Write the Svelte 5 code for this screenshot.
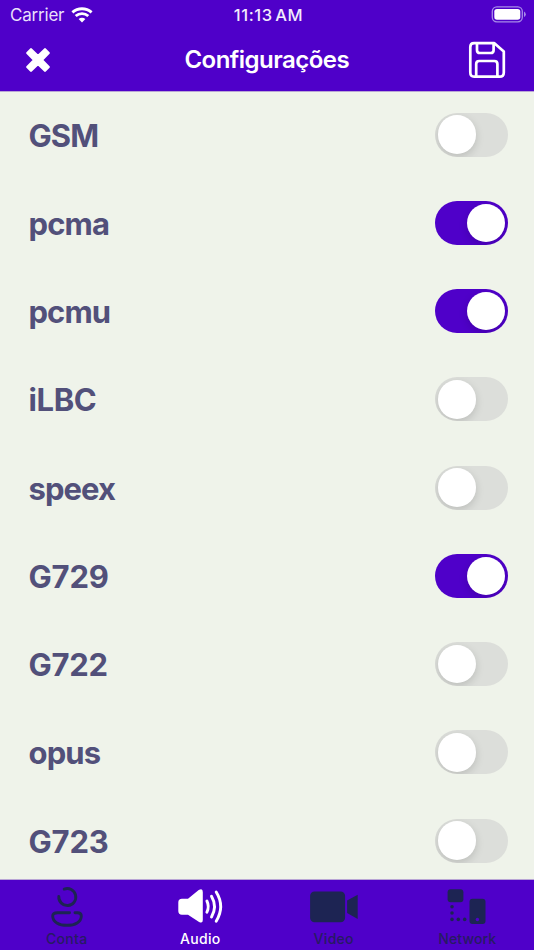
<script>
  const codecs = [
    { name: 'GSM', on: false, spacing: -0.95 },
    { name: 'pcma', on: true, spacing: -0.85 },
    { name: 'pcmu', on: true, spacing: -0.95 },
    { name: 'iLBC', on: false, spacing: -0.4 },
    { name: 'speex', on: false, spacing: -0.95 },
    { name: 'G729', on: true, spacing: -0.15 },
    { name: 'G722', on: false, spacing: -0.3 },
    { name: 'opus', on: false, spacing: -0.85 },
    { name: 'G723', on: false, spacing: -0.2 }
  ];
  let states = $state(codecs.map((c) => c.on));
</script>

<div class="screen">
  <header>
    <div class="status">
      <div class="carrier">
        <span>Carrier</span>
        <svg width="22" height="16" viewBox="0 0 22 16" fill="none" stroke="#fff" stroke-width="2.9">
          <path d="M1.4 5.4C6.9 .6 15.1 .6 20.6 5.4" />
          <path d="M4.7 9C8.3 5.8 13.7 5.8 17.3 9" />
          <path d="M7.6 12.1C9.6 10.3 12.4 10.3 14.4 12.1L11 15.5Z" fill="#fff" stroke="none" />
        </svg>
      </div>
      <span class="time">11:13 AM</span>
      <svg class="battery" width="36" height="17" viewBox="0 0 36 17">
        <rect x="1.3" y=".8" width="30" height="15" rx="4.5" fill="none" stroke="#a78be8" stroke-width="1.3" />
        <rect x="3.3" y="2.9" width="26" height="10.8" rx="2.7" fill="#fff" />
        <path d="M33 5.5q1.8 .9 1.8 2.8t-1.8 2.8z" fill="#a78be8" />
      </svg>
    </div>
    <div class="nav">
      <button aria-label="Fechar">
        <svg width="26" height="26" viewBox="0 0 26 26" fill="#fff" stroke="#fff" stroke-width="2.4" stroke-linejoin="round">
          <path d="M6 2.3 13 9.1 20 2.3 23.7 6 16.9 13 23.7 20 20 23.7 13 16.9 6 23.7 2.3 20 9.1 13 2.3 6Z" />
        </svg>
      </button>
      <h1>Configurações</h1>
      <button class="save" aria-label="Salvar">
        <svg width="38" height="38" viewBox="0 0 38 38" fill="none" stroke="#fff" stroke-width="2.7" stroke-linejoin="round">
          <path d="M6.1 2.1H26.1L35.8 10.6V31.4Q35.8 35.6 31.6 35.6H6.1Q2.3 35.6 2.3 31.4V5.9Q2.3 2.1 6.1 2.1Z" />
          <path d="M9 2.4V9.2Q9 12 11.8 12H22.8Q25.6 12 25.6 9.2V2.4M8.2 35.4V23Q8.2 20 11.2 20H26.4Q29.4 20 29.4 23V35.4" />
        </svg>
      </button>
    </div>
  </header>

  <main>
    {#each codecs as codec, i}
      <div class="row">
        <span class="name" style:letter-spacing="{codec.spacing}px">{codec.name}</span>
        <button
          class="switch"
          class:on={states[i]}
          role="switch"
          aria-checked={states[i]}
          aria-label={codec.name}
          onclick={() => (states[i] = !states[i])}
        ><i></i></button>
      </div>
    {/each}
  </main>

  <footer>
    <div class="tab">
      <svg width="56" height="44" viewBox="0 0 56 44" fill="none" stroke="#1d2453" stroke-width="2.9" stroke-linecap="round">
        <path d="M25.2 4.1A8.5 8.5 0 1 1 19.8 11.5" />
        <path d="M30.5 27.7H18.5Q13.7 27.7 13.7 31C13.7 37 20 40.3 28 40.3S42.3 37 42.3 31Q42.3 27.7 38.5 27.7H36" />
      </svg>
      <span>Conta</span>
    </div>
    <div class="tab active">
      <svg width="56" height="44" viewBox="0 0 56 44" fill="none" stroke="#fff" stroke-width="2.9" stroke-linecap="round">
        <path d="M10 13.7H16L26.7 5.1Q30.8 2.8 30.8 7V35Q30.8 39 26.7 36.7L16 29.7H10Q6.3 29.7 6.3 26V17.4Q6.3 13.7 10 13.7Z" fill="#fff" stroke="none" />
        <path d="M34.9 16Q37.6 21.5 34.9 27.2M39.5 11.2Q45.5 21.5 39.5 32M44.2 7Q53.2 21.5 44.2 36.2" />
      </svg>
      <span>Audio</span>
    </div>
    <div class="tab">
      <svg width="56" height="44" viewBox="0 0 56 44" fill="#1d2453">
        <rect x="4.1" y="6.5" width="35" height="30.7" rx="4.5" />
        <path d="M41.1 15.5 51.7 9.7V34L41.1 28Z" />
      </svg>
      <span>Video</span>
    </div>
    <div class="tab">
      <svg width="56" height="44" viewBox="0 0 56 44" fill="#1d2453">
        <rect x="8.6" y="4.2" width="15.8" height="13" rx="3" />
        <rect x="30.5" y="13.8" width="16" height="25.2" rx="3" />
        <circle cx="13" cy="21.8" r="1.8" /><circle cx="13" cy="28" r="1.8" />
        <circle cx="13" cy="34.4" r="1.8" /><circle cx="19.3" cy="34.4" r="1.8" /><circle cx="25.7" cy="34.4" r="1.8" />
        <circle cx="38.4" cy="34.5" r="1.7" fill="#4f00c9" />
      </svg>
      <span class="network">Network</span>
    </div>
  </footer>
</div>

<style>
  .screen {
    width: 534px;
    height: 950px;
    display: flex;
    flex-direction: column;
    overflow: hidden;
    background: #eff3ea;
    font-family: Inter, "Liberation Sans", sans-serif;
  }
  button { border: 0; padding: 0; background: none; display: flex; }
  svg { display: block; flex: none; }
  header {
    height: 92px;
    flex: none;
    background: #4f00c9;
    color: #fff;
    border-bottom: 1px solid #b9a5d5;
    box-sizing: border-box;
  }
  .status {
    height: 30px;
    display: grid;
    grid-template-columns: 1fr auto 1fr;
    align-items: center;
    padding: 0 7px 0 10px;
    font-size: 17px;
  }
  .carrier { display: flex; align-items: center; gap: 7px; color: #e8dffa; letter-spacing: -.2px; }
  .carrier svg { margin-top: -1px; }
  .time { font-weight: 500; font-size: 16.5px; color: #f2ecfc; word-spacing: -2.5px; letter-spacing: .6px; }
  .battery { justify-self: end; margin-top: -1px; }
  .nav {
    height: 59px;
    display: grid;
    grid-template-columns: 1fr auto 1fr;
    align-items: center;
    padding: 0 28px 0 24.5px;
  }
  .save { justify-self: end; }
  h1 { margin: 1px 0 0 3px; font-size: 24px; line-height: 30px; font-weight: 600; letter-spacing: -.53px; }
  main { flex: 1; min-height: 0; overflow: hidden; }
  .row {
    height: 88.25px;
    box-sizing: border-box;
    padding: 0 26px 3px 28.5px;
    display: flex;
    align-items: center;
    justify-content: space-between;
  }
  .name { font-size: 31px; font-weight: 700; line-height: 40px; padding-top: 2px; color: #52507a; }
  .switch {
    width: 73px;
    height: 44px;
    border-radius: 22px;
    background: #dcdeda;
    padding: 2.75px;
    box-sizing: border-box;
    overflow: hidden;
  }
  .switch i {
    width: 38.5px;
    height: 38.5px;
    border-radius: 50%;
    background: #fff;
    box-shadow: 0 3px 9px rgba(0, 0, 0, .15);
  }
  .switch.on { background: #4f00c9; justify-content: flex-end; }
  footer {
    height: 71px;
    flex: none;
    box-sizing: border-box;
    border-top: 1px solid #b9a5d5;
    background: #4f00c9;
    display: grid;
    grid-template-columns: repeat(4, 1fr);
  }
  .tab {
    display: flex;
    flex-direction: column;
    align-items: center;
    padding-top: 5px;
    font-size: 14px;
    line-height: 20px;
    font-weight: 500;
    letter-spacing: .3px;
    color: #271b62;
  }
  .network { letter-spacing: .15px; }
  .active { color: #fff; }
</style>
